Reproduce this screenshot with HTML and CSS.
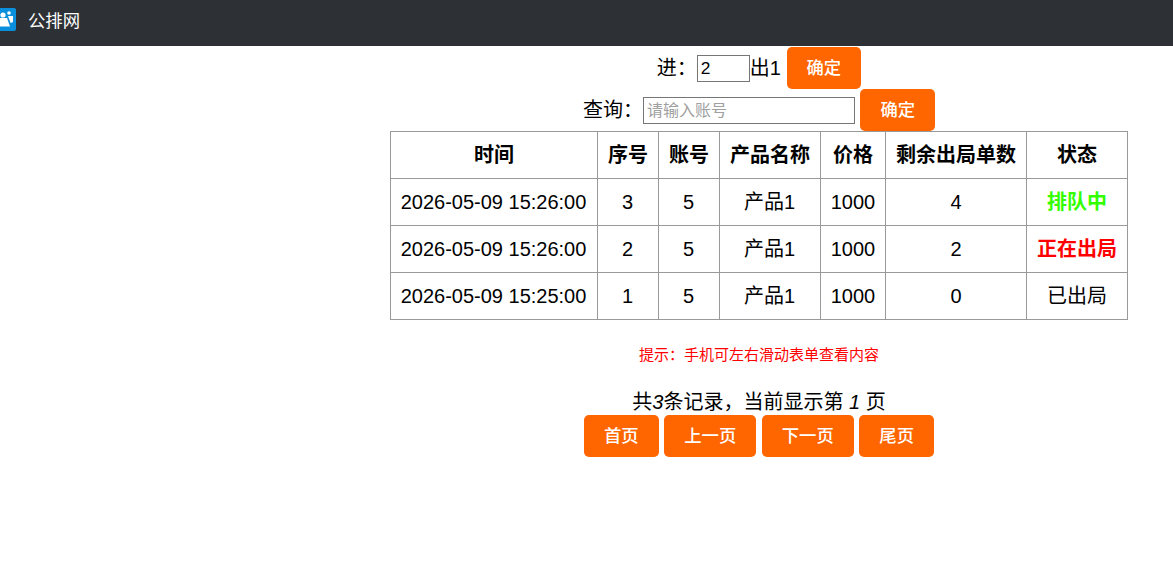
FILE: index.html
```html
<!DOCTYPE html>
<html lang="zh-CN">

<head>
    <meta charset="UTF-8">
    <meta name="viewport" content="width=device-width, initial-scale=1.0">
    <title>公排网</title>
    <link rel="stylesheet" href="styles.css">
</head>

<body>
    <!-- 顶部导航 -->
    <div class="navbar">
        <svg class="logo" viewBox="0 0 16 23" width="16" height="23">
            <path d="M0 0H14a2 2 0 0 1 2 2V21a2 2 0 0 1-2 2H0Z" fill="#0a8fdc" />
            <circle cx="3" cy="7" r="2.600" fill="#fff" />
            <circle cx="9" cy="5" r="1.800" fill="#fff" />
            <path d="M0 10H7L10 18.500H0Z" fill="#fff" />
            <path d="M8 8H13V14L10.500 15Z" fill="#fff" />
        </svg>
        <span class="brand">公排网</span>
    </div>

    <div class="main">
        <form class="line">进：<input class="num" type="text" value="2">出1 <button class="btn" type="button">确定</button></form>
        <form class="line">查询：<input class="search" type="text" placeholder="请输入账号"> <button class="btn" type="button">确定</button></form>

        <table class="list">
            <tr>
                <th class="c-time">时间</th>
                <th class="c-no">序号</th>
                <th class="c-no">账号</th>
                <th class="c-name">产品名称</th>
                <th class="c-price">价格</th>
                <th class="c-left">剩余出局单数</th>
                <th>状态</th>
            </tr>
            <tr>
                <td>2026-05-09 15:26:00</td>
                <td>3</td>
                <td>5</td>
                <td>产品1</td>
                <td>1000</td>
                <td>4</td>
                <td class="waiting">排队中</td>
            </tr>
            <tr>
                <td>2026-05-09 15:26:00</td>
                <td>2</td>
                <td>5</td>
                <td>产品1</td>
                <td>1000</td>
                <td>2</td>
                <td class="running">正在出局</td>
            </tr>
            <tr>
                <td>2026-05-09 15:25:00</td>
                <td>1</td>
                <td>5</td>
                <td>产品1</td>
                <td>1000</td>
                <td>0</td>
                <td>已出局</td>
            </tr>
        </table>

        <p class="tip">提示：手机可左右滑动表单查看内容</p>

        <div class="pager">
            <div class="pager-info">共<i>3</i>条记录，当前显示第 <i>1</i> 页</div>
            <button class="btn" type="button">首页</button>
            <button class="btn" type="button">上一页</button>
            <button class="btn" type="button">下一页</button>
            <button class="btn" type="button">尾页</button>
        </div>
    </div>
</body>

</html>
```

FILE: styles.css
```css
body {
    margin: 0;
    font-family: "Liberation Sans", "Noto Sans CJK SC", sans-serif;
    font-size: 20px;
    color: #000;
    background-color: #fff;
}

.navbar {
    display: flex;
    align-items: center;
    height: 46px;
    background-color: #2d3135;
    padding-bottom: 7px;
    box-sizing: border-box;
}

.navbar .logo {
    display: block;
}

.navbar .brand {
    margin-top: 3px;
    margin-left: 12px;
    font-size: 17.33px;
    line-height: 24px;
    color: #fff;
}

.main {
    margin-left: 345px;
    padding-top: 1px;
}

.line {
    height: 42px;
    line-height: 42px;
    margin: 0;
    text-align: center;
    white-space: nowrap;
}

.num,
.search {
    box-sizing: border-box;
    height: 27px;
    margin: 8px 0 0;
    padding: 1px 3px;
    border: 1px solid #767676;
    font-family: inherit;
    vertical-align: top;
}

.num {
    width: 53px;
    font-size: 17.33px;
}

.search {
    width: 212px;
    font-size: 16px;
}

.search::placeholder {
    color: #a0a0a0;
}

.btn {
    height: 42px;
    padding: 0 20px;
    border: 0;
    border-radius: 5px;
    background-color: #f60;
    color: #fff;
    font-family: inherit;
    font-size: 17.33px;
    font-weight: 500;
    line-height: 24px;
    vertical-align: top;
}

.list {
    width: 738px;
    margin: 0 auto 0 45px;
    border-collapse: collapse;
    table-layout: fixed;
}

.list th,
.list td {
    height: 46px;
    padding: 0;
    border: 1px solid #999;
    line-height: 23px;
    text-align: center;
}

.list td:nth-child(-n+4) {
    padding-right: 1px;
}

.c-time {
    width: 206px;
}

.c-no {
    width: 60px;
}

.c-name {
    width: 100px;
}

.c-price {
    width: 64px;
}

.c-left {
    width: 140px;
}

.waiting {
    color: #3f0;
    font-weight: bold;
}

.running {
    color: #f00;
    font-weight: bold;
}

.tip {
    margin: 25px 0 0;
    font-size: 15px;
    line-height: 20px;
    color: #f00;
    text-align: center;
}

.pager {
    margin-top: 25px;
    text-align: center;
}

.pager-info {
    height: 25px;
    line-height: 25px;
}
```
